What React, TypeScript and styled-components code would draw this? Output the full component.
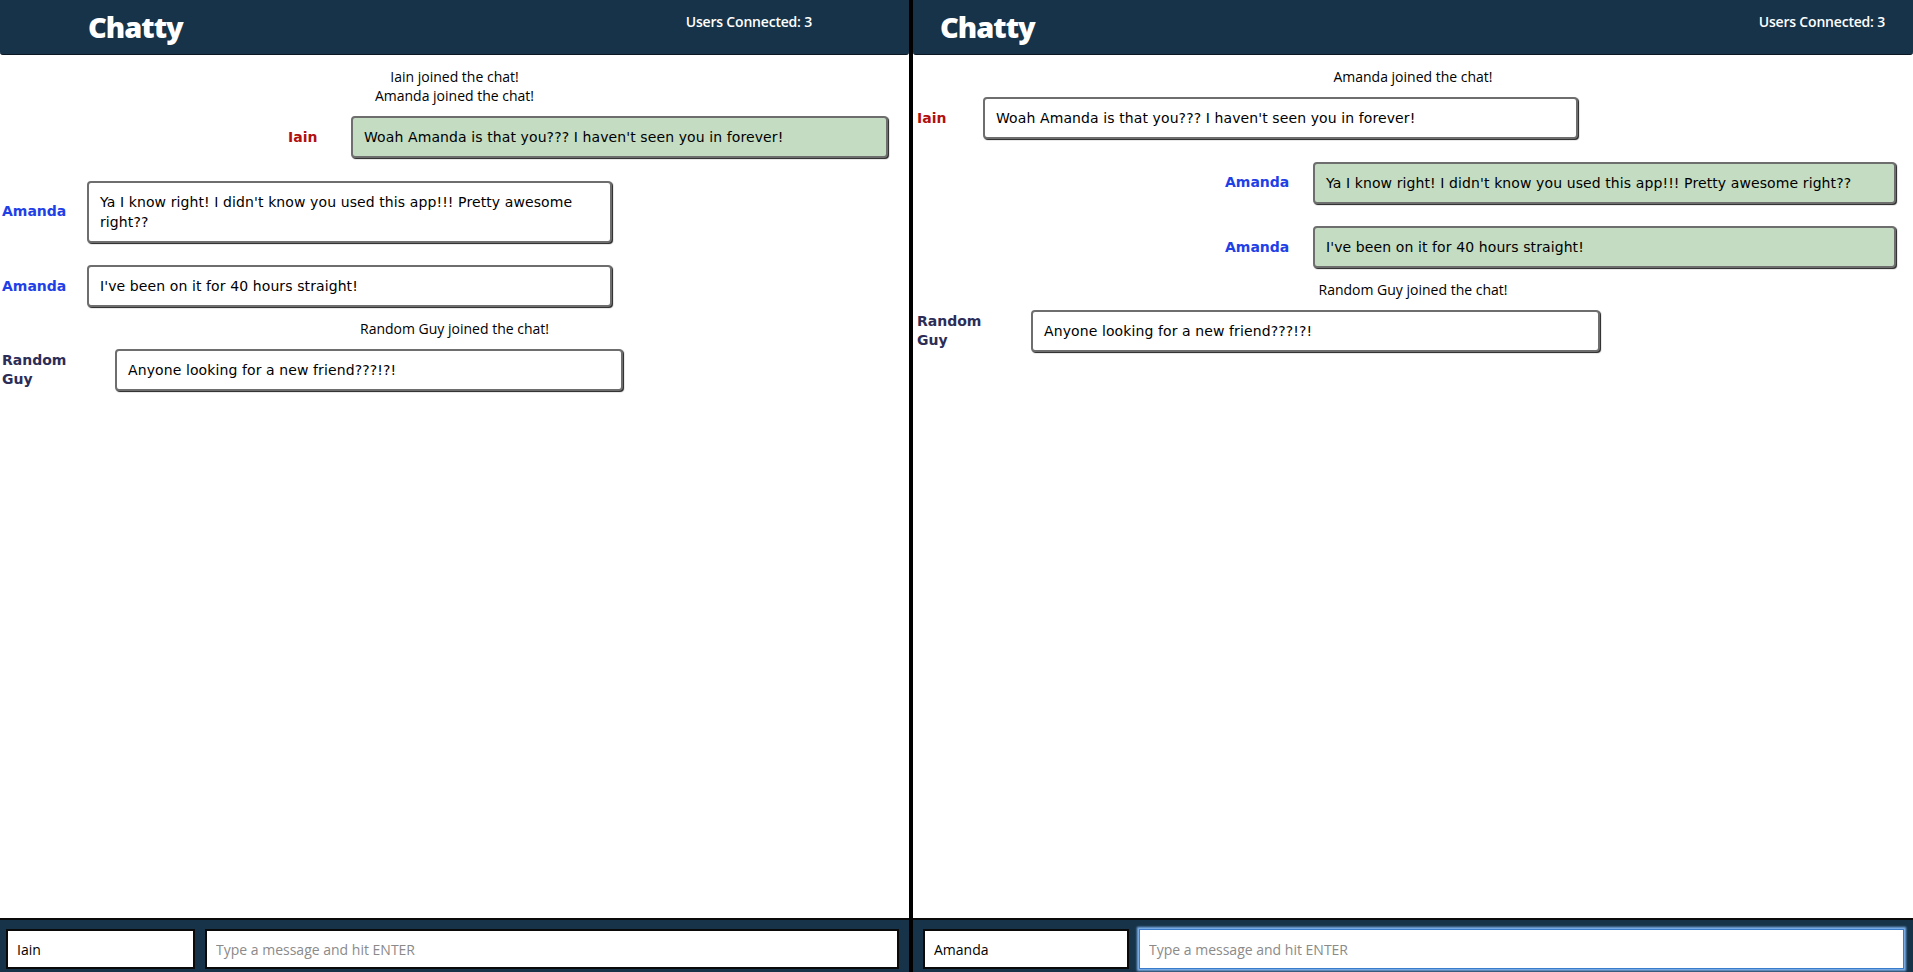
import React from "react";
import styled, { createGlobalStyle, css } from "styled-components";

const GlobalStyle = createGlobalStyle`
  html, body { margin: 0; padding: 0; height: 100%; overflow: hidden; }
  body { font-family: "Open Sans", "Liberation Sans", sans-serif; background: #000; }
  #root { height: 100vh; }
  * { box-sizing: border-box; }
`;

const Page = styled.div`
  display: flex;
  gap: 4px;
  height: 100vh;
  background: #000;
`;

const Window = styled.section<{ $w: number }>`
  flex: 0 0 ${(p) => p.$w}px;
  width: ${(p) => p.$w}px;
  display: flex;
  flex-direction: column;
  background: #fff;
  overflow: hidden;
`;

const NavBar = styled.header<{ $padL: number; $padR: number }>`
  height: 55px;
  flex: none;
  display: flex;
  justify-content: space-between;
  align-items: flex-start;
  padding: 0 ${(p) => p.$padR}px 0 ${(p) => p.$padL}px;
  background: #163349;
  border-bottom: 1px solid #0b1824;
  border-radius: 0 0 3px 3px;
`;

const Brand = styled.h1`
  margin: 0;
  font-family: "Open Sans", sans-serif;
  font-weight: 800;
  font-size: 29px;
  line-height: 54px;
  color: #fff;
  letter-spacing: -1px;
`;

const UserCount = styled.span`
  margin-top: 12px;
  font-family: "Open Sans", sans-serif;
  font-weight: 600;
  font-size: 14px;
  line-height: 20px;
  color: #fff;
  letter-spacing: -0.2px;
`;

const MessageList = styled.main`
  flex: 1;
  display: flex;
  flex-direction: column;
  padding-top: 12px;
  overflow: hidden;
`;

const Notification = styled.div`
  text-align: center;
  font-family: "Open Sans", sans-serif;
  font-size: 14px;
  line-height: 19px;
  color: #000;
`;

const MessageRow = styled.div<{ $own: boolean; $inset: number; $ownRight: number }>`
  display: flex;
  align-items: center;
  padding: 11px 0 11.5px;
  ${(p) =>
    p.$own
      ? css`
          justify-content: flex-end;
          padding-right: ${p.$ownRight}px;
        `
      : css`
          justify-content: flex-start;
          padding-left: ${p.$inset}px;
        `}
`;

const Username = styled.span<{ $w: number; $color: string }>`
  flex: 0 0 ${(p) => p.$w}px;
  padding-right: 20px;
  font-family: "DejaVu Sans", Verdana, sans-serif;
  font-weight: 700;
  font-size: 14px;
  line-height: 19px;
  color: ${(p) => p.$color};
`;

const Bubble = styled.div<{ $w: number; $own: boolean }>`
  flex: 0 0 ${(p) => p.$w}px;
  padding: 9px 11px;
  border: 2px solid #6e6e6e;
  border-radius: 4px;
  box-shadow: 1px 1px 1px #1e1e1e;
  background: ${(p) => (p.$own ? "#c3dcc2" : "#fff")};
  font-family: "DejaVu Sans", Verdana, sans-serif;
  font-size: 14px;
  letter-spacing: 0.1px;
  line-height: 20px;
  color: #000;
`;

const Composer = styled.footer<{ $padL: number; $padR: number }>`
  height: 54px;
  flex: none;
  display: flex;
  align-items: flex-start;
  gap: 10px;
  padding: 9px ${(p) => p.$padR}px 0 ${(p) => p.$padL}px;
  background: #163349;
  border-top: 2px solid #0a0a0a;
`;

const NameInput = styled.input<{ $w: number }>`
  flex: 0 0 ${(p) => p.$w}px;
  width: ${(p) => p.$w}px;
  min-width: 0;
  height: 40px;
  padding: 0 9px;
  border: 2px solid #0a0a0a;
  background: #fff;
  font-family: "Open Sans", sans-serif;
  font-size: 14px;
  color: #000;
  outline: none;
`;

const MessageInput = styled.input<{ $focused?: boolean }>`
  flex: 1 1 0;
  width: 0;
  min-width: 0;
  height: 40px;
  padding: 0 9px;
  border: 2px solid #0a0a0a;
  background: #fff;
  font-family: "Open Sans", sans-serif;
  font-size: 14px;
  color: #000;
  outline: none;
  &::placeholder { color: #8a8a8a; }
  ${(p) =>
    p.$focused &&
    css`
      border: 1px solid #3a7bcc;
      box-shadow: 0 0 2px 2px #7fb3ee;
    `}
`;

type Item =
  | { kind: "notice"; text: string }
  | { kind: "msg"; user: string; text: string; own: boolean; nameW: number; bubbleW: number };

const COLORS: Record<string, string> = {
  Iain: "#b20f0f",
  Amanda: "#1e40e6",
  "Random Guy": "#2c2d57",
};

interface WindowConfig {
  width: number;
  headerL: number;
  headerR: number;
  inset: number;
  ownRight: number;
  footL: number;
  footR: number;
  nameInputW: number;
  user: string;
  focused: boolean;
  items: Item[];
}

const windows: WindowConfig[] = [
  {
    width: 909,
    headerL: 88,
    headerR: 97,
    inset: 2,
    ownRight: 21,
    footL: 6,
    footR: 10,
    nameInputW: 189,
    user: "Iain",
    focused: false,
    items: [
      { kind: "notice", text: "Iain joined the chat!" },
      { kind: "notice", text: "Amanda joined the chat!" },
      { kind: "msg", user: "Iain", own: true, nameW: 63, bubbleW: 537, text: "Woah Amanda is that you??? I haven't seen you in forever!" },
      { kind: "msg", user: "Amanda", own: false, nameW: 85, bubbleW: 525, text: "Ya I know right! I didn't know you used this app!!! Pretty awesome right??" },
      { kind: "msg", user: "Amanda", own: false, nameW: 85, bubbleW: 525, text: "I've been on it for 40 hours straight!" },
      { kind: "notice", text: "Random Guy joined the chat!" },
      { kind: "msg", user: "Random Guy", own: false, nameW: 113, bubbleW: 508, text: "Anyone looking for a new friend???!?!" },
    ],
  },
  {
    width: 1000,
    headerL: 27,
    headerR: 28,
    inset: 4,
    ownRight: 17,
    footL: 10,
    footR: 9,
    nameInputW: 206,
    user: "Amanda",
    focused: true,
    items: [
      { kind: "notice", text: "Amanda joined the chat!" },
      { kind: "msg", user: "Iain", own: false, nameW: 66, bubbleW: 595, text: "Woah Amanda is that you??? I haven't seen you in forever!" },
      { kind: "msg", user: "Amanda", own: true, nameW: 88, bubbleW: 583, text: "Ya I know right! I didn't know you used this app!!! Pretty awesome right??" },
      { kind: "msg", user: "Amanda", own: true, nameW: 88, bubbleW: 583, text: "I've been on it for 40 hours straight!" },
      { kind: "notice", text: "Random Guy joined the chat!" },
      { kind: "msg", user: "Random Guy", own: false, nameW: 114, bubbleW: 569, text: "Anyone looking for a new friend???!?!" },
    ],
  },
];

function ChatWindow({ cfg }: { cfg: WindowConfig }) {
  return (
    <Window $w={cfg.width}>
      <NavBar $padL={cfg.headerL} $padR={cfg.headerR}>
        <Brand>Chatty</Brand>
        <UserCount>Users Connected: 3</UserCount>
      </NavBar>
      <MessageList>
        {cfg.items.map((it, i) =>
          it.kind === "notice" ? (
            <Notification key={i}>{it.text}</Notification>
          ) : (
            <MessageRow key={i} $own={it.own} $inset={cfg.inset} $ownRight={cfg.ownRight}>
              <Username $w={it.nameW} $color={COLORS[it.user]}>
                {it.user}
              </Username>
              <Bubble $w={it.bubbleW} $own={it.own}>
                {it.text}
              </Bubble>
            </MessageRow>
          )
        )}
      </MessageList>
      <Composer $padL={cfg.footL} $padR={cfg.footR}>
        <NameInput $w={cfg.nameInputW} defaultValue={cfg.user} />
        <MessageInput $focused={cfg.focused} placeholder="Type a message and hit ENTER" />
      </Composer>
    </Window>
  );
}

export default function App() {
  return (
    <>
      <GlobalStyle />
      <Page>
        {windows.map((w, i) => (
          <ChatWindow key={i} cfg={w} />
        ))}
      </Page>
    </>
  );
}
